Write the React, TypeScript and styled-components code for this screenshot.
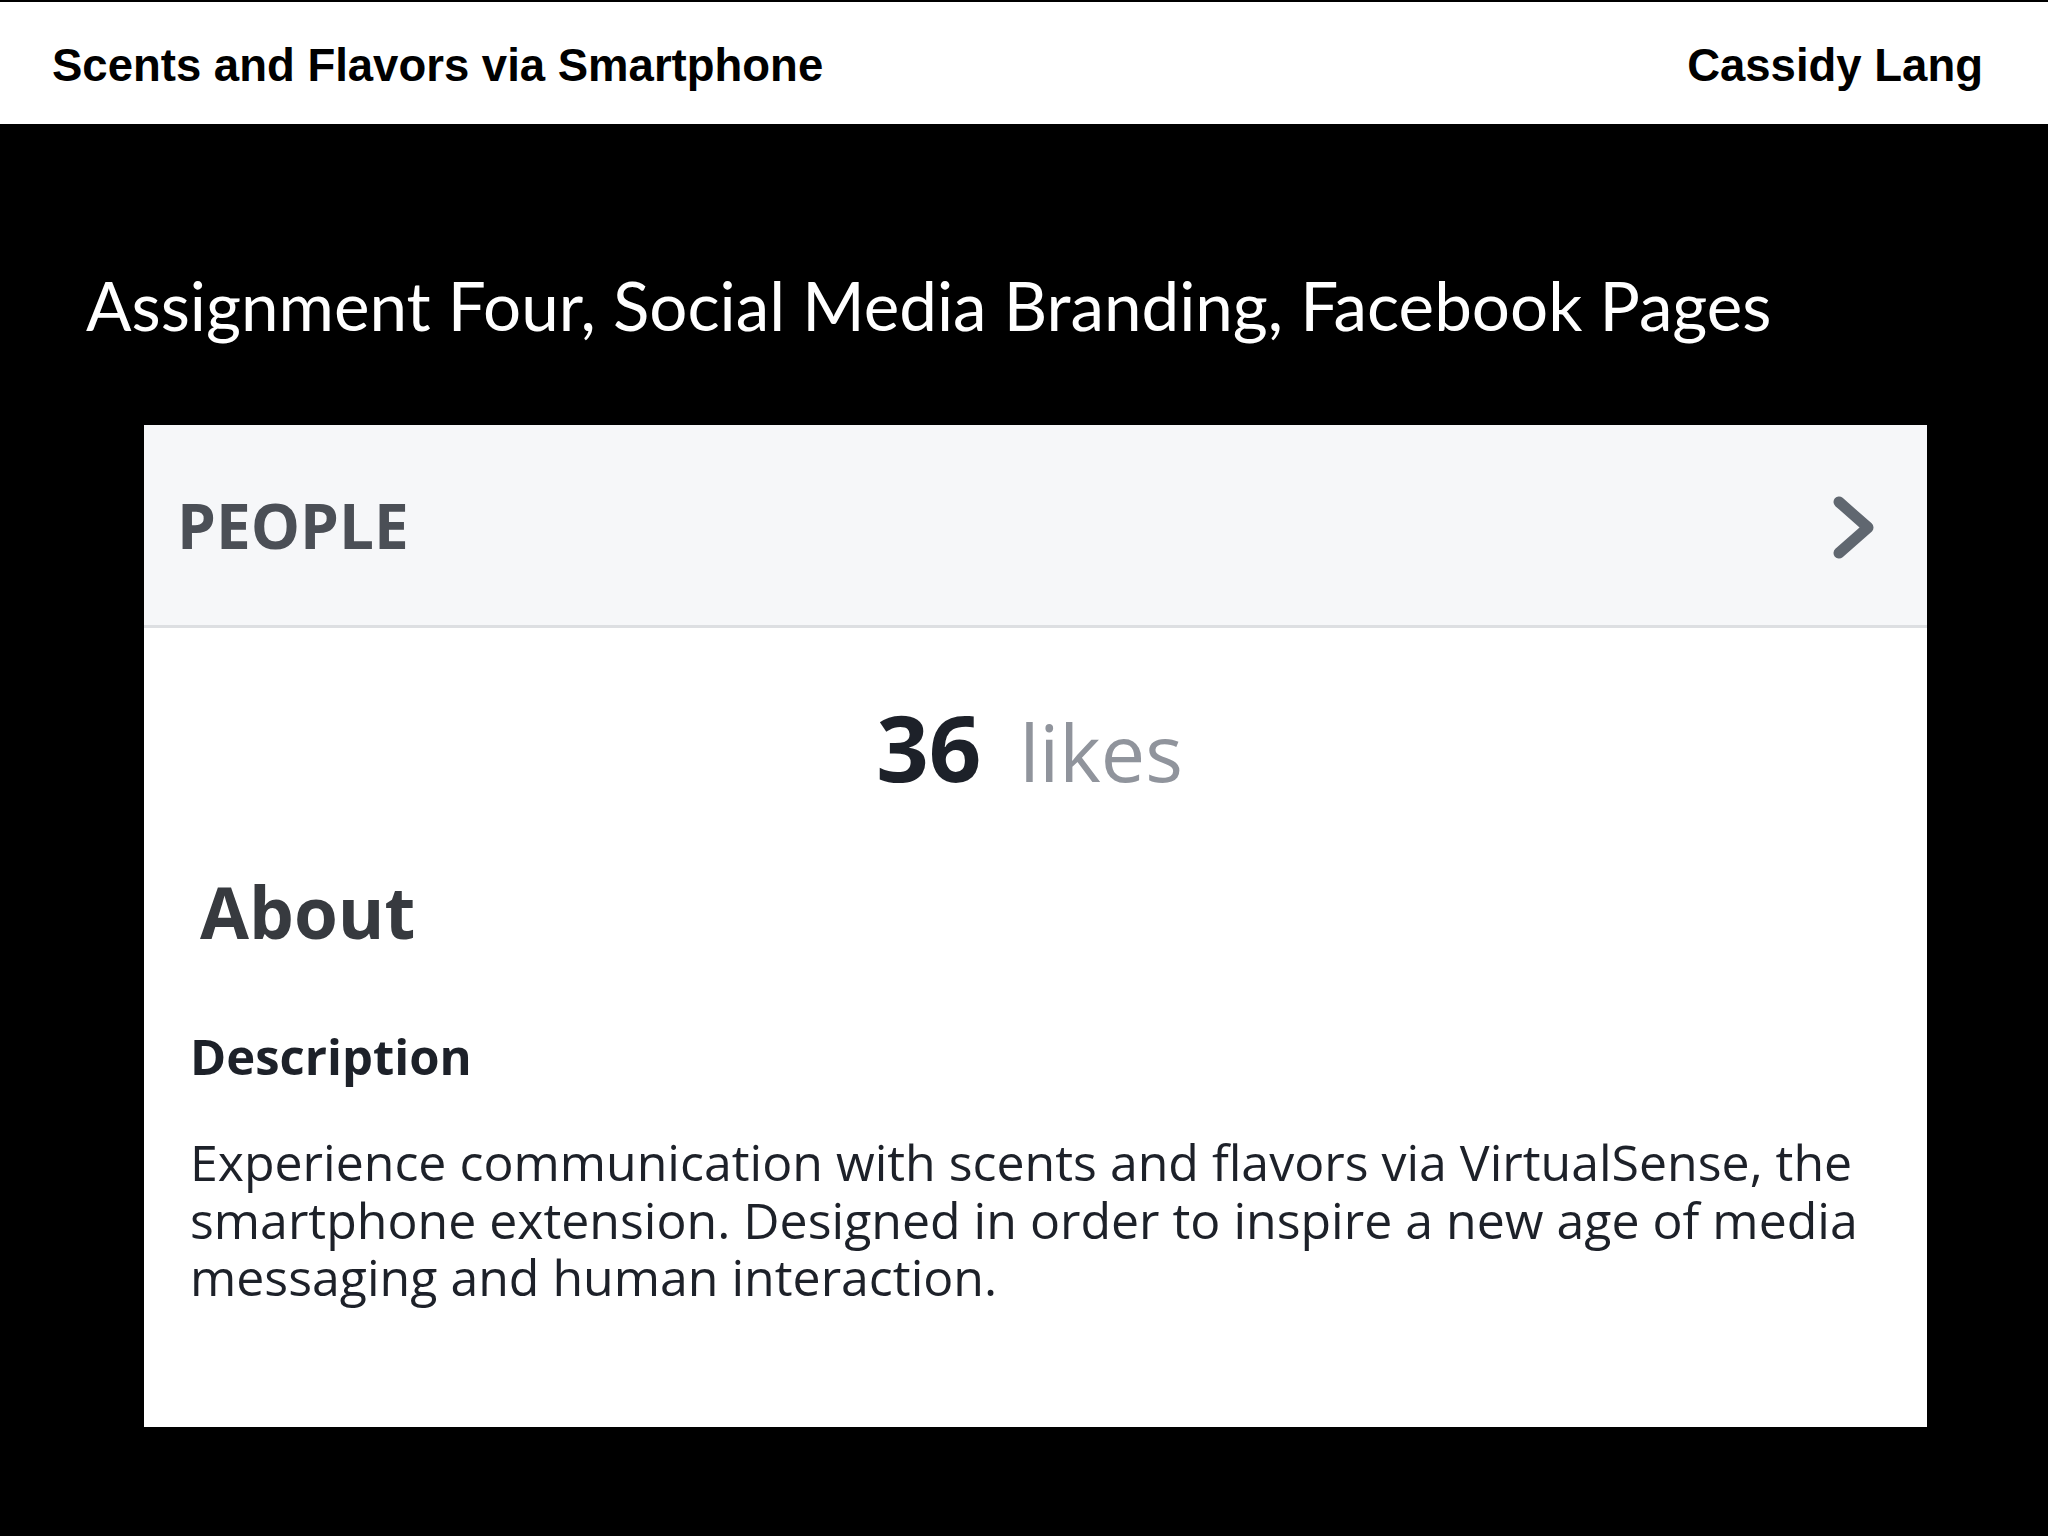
import * as React from 'react';
import styled, { createGlobalStyle } from 'styled-components';

const GlobalStyle = createGlobalStyle`
  html, body {
    margin: 0;
    padding: 0;
    background: #000;
  }
  body {
    width: 2048px;
    min-height: 1536px;
  }
`;

export default function App() {
  return (
    <>
      <GlobalStyle />
      <Page>
        <TopBar>
          <TopText>Scents and Flavors via Smartphone</TopText>
          <TopText>Cassidy Lang</TopText>
        </TopBar>
        <Stage>
          <SlideTitle>Assignment Four, Social Media Branding, Facebook Pages</SlideTitle>
          <Card>
            <CardHeader>
              <SectionLabel>PEOPLE</SectionLabel>
              <Chevron width="42" height="63" viewBox="0 0 42 63">
                <path
                  d="M6 6 L35 31.5 L6 57"
                  fill="none"
                  stroke="#606770"
                  strokeWidth="11"
                  strokeLinecap="round"
                  strokeLinejoin="round"
                />
              </Chevron>
            </CardHeader>
            <CardBody>
              <Likes>
                <LikeCount>36</LikeCount>
                <LikeWord>likes</LikeWord>
              </Likes>
              <AboutTitle>About</AboutTitle>
              <FieldLabel>Description</FieldLabel>
              <FieldText>
                Experience communication with scents and flavors via VirtualSense, the
                <br />
                smartphone extension. Designed in order to inspire a new age of media
                <br />
                messaging and human interaction.
              </FieldText>
            </CardBody>
          </Card>
        </Stage>
      </Page>
    </>
  );
}

const Page = styled.div`
  display: flex;
  flex-direction: column;
  width: 2048px;
  min-height: 1536px;
  background: #000;
`;

const TopBar = styled.header`
  display: flex;
  align-items: center;
  justify-content: space-between;
  box-sizing: border-box;
  height: 124px;
  border-top: 2px solid #000;
  padding: 6px 65px 0 52px;
  background: #fff;
`;

const TopText = styled.div`
  font-family: 'Liberation Sans', Arial, sans-serif;
  font-weight: 700;
  font-size: 45.5px;
  line-height: 1;
  color: #000;
`;

const Stage = styled.main`
  display: flex;
  flex-direction: column;
  padding-top: 141px;
`;

const SlideTitle = styled.h1`
  margin: 0 0 78px 86px;
  font-family: Lato, 'Open Sans', sans-serif;
  font-weight: 400;
  font-size: 67.3px;
  line-height: 81.6px;
  color: #fff;
  white-space: nowrap;
`;

const Card = styled.section`
  width: 1783px;
  margin-left: 144px;
  background: #fff;
  font-family: 'Open Sans', 'Noto Sans', sans-serif;
`;

const CardHeader = styled.div`
  display: flex;
  align-items: center;
  justify-content: space-between;
  height: 200px;
  padding: 0 52px 0 33px;
  background: #f6f7f9;
  border-bottom: 3px solid #dddfe2;
`;

const SectionLabel = styled.div`
  font-weight: 700;
  font-size: 62px;
  line-height: 1;
  color: #4b4f56;
`;

const Chevron = styled.svg`
  display: block;
  margin-top: 6px;
`;

const CardBody = styled.div`
  display: flex;
  flex-direction: column;
  padding: 73px 0 120px;
`;

const Likes = styled.div`
  text-align: center;
  padding-right: 12px;
  font-size: 92px;
  line-height: 1;
`;

const LikeCount = styled.span`
  font-weight: 700;
  font-size: 92px;
  color: #1d2129;
`;

const LikeWord = styled.span`
  margin-left: 38px;
  font-weight: 400;
  font-size: 79px;
  color: #90949c;
`;

const AboutTitle = styled.h2`
  margin: 82px 0 0 56px;
  font-weight: 700;
  font-size: 71px;
  line-height: 73px;
  color: #373a3f;
`;

const FieldLabel = styled.h3`
  margin: 84px 0 0 46px;
  font-weight: 700;
  font-size: 49px;
  line-height: 1;
  color: #1d2129;
`;

const FieldText = styled.p`
  margin: 53.5px 0 0 46px;
  font-weight: 400;
  font-size: 50px;
  line-height: 57.5px;
  color: #1d2129;
  white-space: nowrap;
`;
